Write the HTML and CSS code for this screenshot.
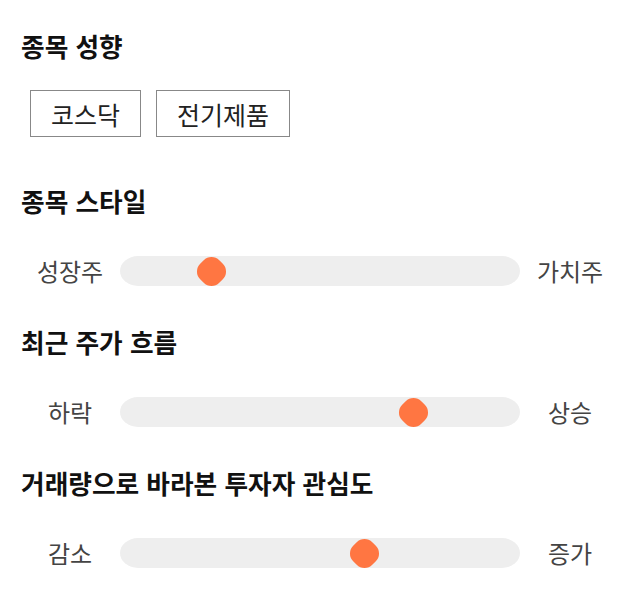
FILE: index.html
```html
<!DOCTYPE html>
<html lang="ko">
<head>
<meta charset="utf-8">
<link rel="stylesheet" href="styles.css">
</head>
<body>
<main class="page">
  <section class="section">
    <h2 class="title">종목 성향</h2>
    <div class="chips">
      <span class="chip">코스닥</span>
      <span class="chip">전기제품</span>
    </div>
  </section>
  <section class="section">
    <h2 class="title">종목 스타일</h2>
    <div class="slider">
      <span class="label">성장주</span>
      <div class="track"><span class="thumb" style="left:22.9%"></span></div>
      <span class="label">가치주</span>
    </div>
  </section>
  <section class="section">
    <h2 class="title">최근 주가 흐름</h2>
    <div class="slider">
      <span class="label">하락</span>
      <div class="track"><span class="thumb" style="left:73.4%"></span></div>
      <span class="label">상승</span>
    </div>
  </section>
  <section class="section">
    <h2 class="title">거래량으로 바라본 투자자 관심도</h2>
    <div class="slider">
      <span class="label">감소</span>
      <div class="track"><span class="thumb" style="left:61%"></span></div>
      <span class="label">증가</span>
    </div>
  </section>
</main>
</body>
</html>
```
FILE: styles.css
```css
* { box-sizing: border-box; }
html, body { margin: 0; background: #fff; }
body {
  font-family: "Noto Sans CJK KR", "Noto Sans", sans-serif;
  color: #222;
}
.page {
  padding: 30px 20px 0 21px;
  display: flex;
  flex-direction: column;
}
.section { display: flex; flex-direction: column; }
.title {
  margin: 0;
  font-size: 25.7px;
  font-weight: 700;
  line-height: 32px;
  color: #111;
}
.chips {
  display: flex;
  gap: 15px;
  margin: 28px 0 48px 9px;
}
.chip {
  border: 1px solid #888;
  height: 47px;
  padding: 0 20px;
  display: flex;
  align-items: center;
  font-size: 25px;
  color: #222;
}
.slider {
  display: grid;
  grid-template-columns: 100px 1fr 100px;
  align-items: center;
  margin: 39px 0 40px -1px;
}
.label {
  text-align: center;
  font-size: 24px;
  color: #444;
  line-height: 30px;
}
.track {
  position: relative;
  height: 30px;
  background: #eeeeee;
  border-radius: 18px / 15px;
}
.thumb {
  position: absolute;
  top: 50%;
  width: 27px;
  height: 27px;
  margin: -13.5px 0 0 -13.5px;
  background: #ff7642;
  border-radius: 11px;
  transform: rotate(45deg);
}
```
